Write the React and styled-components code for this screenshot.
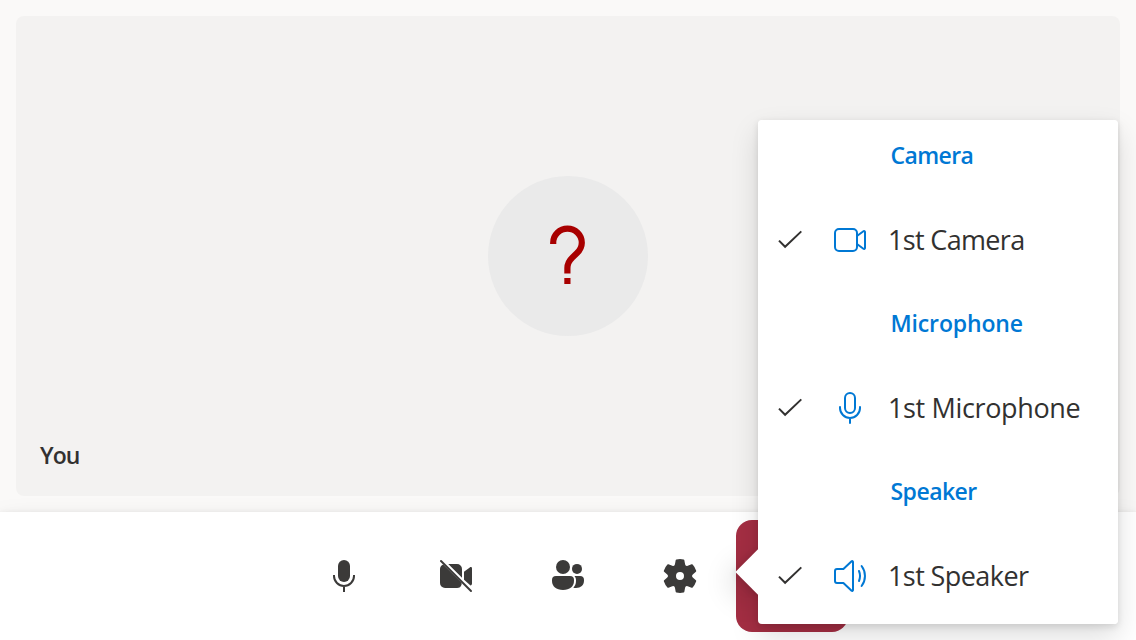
import React from "react";
import styled, { createGlobalStyle } from "styled-components";

const GlobalStyle = createGlobalStyle`
  * { box-sizing: border-box; }
  body {
    margin: 0;
    overflow: hidden;
    background: #faf9f8;
    color: #323130;
    font-family: "Segoe UI", "Open Sans", "Noto Sans", sans-serif;
  }
`;

const popupShadow =
  "0 12.8px 28.8px rgba(0, 0, 0, 0.132), 0 2.4px 7.2px rgba(0, 0, 0, 0.108)";

const Page = styled.div`
  position: relative;
  display: flex;
  flex-direction: column;
  width: 1136px;
  height: 640px;
  overflow: hidden;
`;

const Stage = styled.main`
  flex: 1;
  display: flex;
  padding: 16px;
`;

const VideoTile = styled.section`
  flex: 1;
  display: grid;
  grid-template-rows: 1fr 160px 1fr;
  justify-items: center;
  border-radius: 8px;
  background: #f3f2f1;
`;

const Avatar = styled.div`
  grid-row: 2;
  display: flex;
  align-items: center;
  justify-content: center;
  width: 160px;
  height: 160px;
  border-radius: 50%;
  background: #eaeaea;
`;

const TileName = styled.div`
  grid-row: 3;
  align-self: end;
  justify-self: start;
  padding: 0 24px 25px;
  font-size: 23px;
  line-height: 32px;
  font-weight: 580;
  letter-spacing: -0.9px;
`;

const ControlBar = styled.footer`
  display: flex;
  justify-content: center;
  height: 128px;
  padding: 8px 0;
  background: #fff;
  box-shadow: ${popupShadow};
`;

const ControlButton = styled.button`
  display: flex;
  align-items: center;
  justify-content: center;
  width: 112px;
  height: 112px;
  padding: 0;
  border: 0;
  border-radius: 16px;
  color: #3b3a39;
  background: ${(p) => (p.$danger ? "#a42e43" : "transparent")};
`;

const Popover = styled.div`
  position: absolute;
  left: 758px;
  top: 120px;
  width: 360px;
  border-radius: 4px;
  box-shadow: ${popupShadow};
`;

const Beak = styled.div`
  position: absolute;
  left: -16px;
  top: 436px;
  width: 32px;
  height: 32px;
  background: #fff;
  box-shadow: ${popupShadow};
  transform: rotate(45deg);
`;

const Menu = styled.div`
  position: relative;
  border-radius: 4px;
  background: #fff;
`;

const MenuHeader = styled.div`
  display: flex;
  align-items: center;
  height: 72px;
  padding: 0 0 2px 132.5px;
  color: #0078d4;
  font-size: 23px;
  font-weight: 580;
  letter-spacing: ${(p) => p.$tracking || 0}px;
`;

const MenuItem = styled.div`
  display: flex;
  align-items: center;
  height: 96px;
  padding-left: 12px;
`;

const MenuIcon = styled.span`
  display: flex;
  margin-left: 20px;
  color: #0078d4;
`;

const MenuLabel = styled.span`
  padding-left: 18px;
  font-size: 27px;
  line-height: 40px;
  white-space: nowrap;
  letter-spacing: ${(p) => p.$tracking || 0}px;
`;

const Glyph = styled.svg`
  display: block;
  width: 40px;
  height: 40px;
  flex: none;
`;

const Filled = ({ children }) => (
  <Glyph viewBox="0 0 20 20" fill="currentColor">{children}</Glyph>
);

const Outline = ({ children }) => (
  <Glyph viewBox="0 0 20 20" fill="none" stroke="currentColor" strokeLinecap="round" strokeLinejoin="round">
    {children}
  </Glyph>
);

const MicFilled = () => (
  <Filled>
    <rect x="7" y="2" width="6" height="11" rx="3" />
    <path d="M5 9.5v.5a5 5 0 0 0 10 0v-.5M10 15v3" fill="none" stroke="currentColor" />
  </Filled>
);

const VideoOffFilled = () => (
  <Filled>
    <path d="M3.6 4.2 12.8 13.4v.8A2.5 2.5 0 0 1 10.5 16h-6A2.5 2.5 0 0 1 2 13.5v-7c0-1.05.65-1.95 1.6-2.3Z" />
    <path d="M6.12 4h4.38A2.5 2.5 0 0 1 13 6.5v4.38Z" />
    <path d="M14 7.9l2.9-2.2c.5-.35 1.1 0 1.1.5v7.6c0 .5-.3.9-.75 1L14 11.88Z" />
    <path d="M2.5 2.5l15 15" fill="none" stroke="currentColor" strokeLinecap="round" strokeWidth="1" />
  </Filled>
);

const PeopleFilled = () => (
  <Filled>
    <circle cx="7.5" cy="5.5" r="3.5" />
    <circle cx="14.5" cy="6.45" r="2.5" />
    <path d="M4 10h7a2 2 0 0 1 2 2v.5c0 2.6-2.1 4.5-5.5 4.5S2 15.1 2 12.5V12a2 2 0 0 1 2-2Z" />
    <path d="M13.25 10H16a2 2 0 0 1 2 2v.25C18 14.6 16.4 16 14 16c-.5 0-.95-.05-1.35-.15.85-.9 1.35-2.05 1.35-3.35V12c0-.75-.3-1.45-.75-2Z" />
  </Filled>
);

const SettingsFilled = () => (
  <Filled>
    <path
      fillRule="evenodd"
      d="M1.91 7.38A8.5 8.5 0 0 1 3.7 4.3a.5.5 0 0 1 .54-.13l1.92.68a1 1 0 0 0 1.32-.76l.36-2a.5.5 0 0 1 .4-.4 8.53 8.53 0 0 1 3.55 0c.2.04.35.2.38.4l.37 2a1 1 0 0 0 1.32.76l1.92-.68a.5.5 0 0 1 .54.13 8.5 8.5 0 0 1 1.78 3.08c.06.2 0 .4-.15.54l-1.56 1.32a1 1 0 0 0 0 1.52l1.56 1.32a.5.5 0 0 1 .15.54 8.5 8.5 0 0 1-1.78 3.08.5.5 0 0 1-.54.13l-1.92-.68a1 1 0 0 0-1.32.76l-.37 2a.5.5 0 0 1-.38.4 8.53 8.53 0 0 1-3.56 0 .5.5 0 0 1-.39-.4l-.36-2a1 1 0 0 0-1.32-.76l-1.92.68a.5.5 0 0 1-.54-.13 8.5 8.5 0 0 1-1.78-3.08.5.5 0 0 1 .15-.54l1.56-1.32a1 1 0 0 0 0-1.52L2.06 7.92a.5.5 0 0 1-.15-.54ZM8 10a2 2 0 1 0 4 0 2 2 0 0 0-4 0Z"
    />
  </Filled>
);

const VideoIcon = () => (
  <Outline>
    <rect x="2.5" y="4.5" width="11" height="11" rx="2" />
    <path d="M13.5 8l3.2-2.4c.35-.25.8 0 .8.4v8c0 .4-.45.65-.8.4L13.5 12" />
  </Outline>
);

const MicIcon = () => (
  <Outline>
    <rect x="7.5" y="2.5" width="5" height="10" rx="2.5" />
    <path d="M5 9.5v.5a5 5 0 0 0 10 0v-.5M10 15v2.5" />
  </Outline>
);

const SpeakerIcon = () => (
  <Outline>
    <path d="M6.7 6.5H3.5a1 1 0 0 0-1 1v5a1 1 0 0 0 1 1h3.2l4.1 3.85c.3.25.7.05.7-.35V3c0-.4-.4-.6-.7-.35Z" />
    <path d="M14.5 7.5c.65 1.6.65 3.4 0 5M15.8 5c2.25 3 2.25 7 0 10" />
  </Outline>
);

const CheckIcon = () => (
  <Outline>
    <path d="M4.5 10.3l3.05 3.1 8.1-7.7" strokeWidth="1" strokeLinecap="butt" strokeLinejoin="miter" />
  </Outline>
);

const UnknownIcon = () => (
  <svg width="80" height="80" viewBox="0 0 80 80" fill="none" stroke="#a80000" strokeWidth="6.2">
    <path d="M25.2 28v-1.3a14.3 14.1 0 0 1 28.6 0c0 4.6-1.9 7.6-5 10.6l-4.4 4.1C41.2 44.4 39.4 47.1 39.4 52v5.4" />
    <path d="M39.4 62v6" />
  </svg>
);

const devices = [
  { title: "Camera", label: "1st Camera", Icon: VideoIcon, titleTracking: -0.62, labelTracking: -0.66 },
  { title: "Microphone", label: "1st Microphone", Icon: MicIcon, titleTracking: -0.14, labelTracking: -0.35 },
  { title: "Speaker", label: "1st Speaker", Icon: SpeakerIcon, titleTracking: -0.53, labelTracking: -0.58 },
];

export default function App() {
  return (
    <>
      <GlobalStyle />
      <Page>
        <Stage>
          <VideoTile>
            <Avatar><UnknownIcon /></Avatar>
            <TileName>You</TileName>
          </VideoTile>
        </Stage>
        <ControlBar>
          <ControlButton aria-label="Mute"><MicFilled /></ControlButton>
          <ControlButton aria-label="Turn on camera"><VideoOffFilled /></ControlButton>
          <ControlButton aria-label="People"><PeopleFilled /></ControlButton>
          <ControlButton aria-label="Devices"><SettingsFilled /></ControlButton>
          <ControlButton aria-label="Leave" $danger />
        </ControlBar>
        <Popover>
          <Beak />
          <Menu>
            {devices.map(({ title, label, Icon, titleTracking, labelTracking }) => (
              <React.Fragment key={title}>
                <MenuHeader $tracking={titleTracking}>{title}</MenuHeader>
                <MenuItem>
                  <CheckIcon />
                  <MenuIcon><Icon /></MenuIcon>
                  <MenuLabel $tracking={labelTracking}>{label}</MenuLabel>
                </MenuItem>
              </React.Fragment>
            ))}
          </Menu>
        </Popover>
      </Page>
    </>
  );
}
